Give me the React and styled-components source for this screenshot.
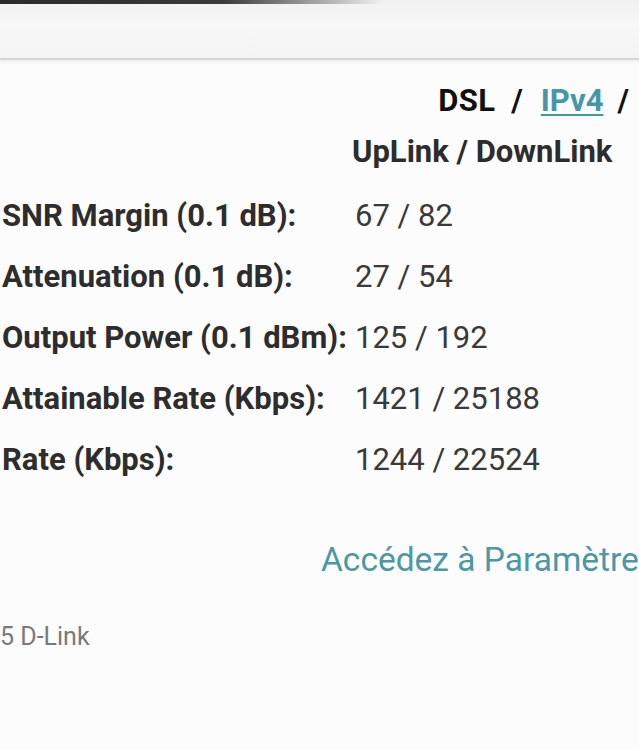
import styled, { createGlobalStyle } from "styled-components";

const rows = [
  { label: "SNR Margin (0.1 dB):", value: "67 / 82" },
  { label: "Attenuation (0.1 dB):", value: "27 / 54" },
  { label: "Output Power (0.1 dBm):", value: "125 / 192" },
  { label: "Attainable Rate (Kbps):", value: "1421 / 25188" },
  { label: "Rate (Kbps):", value: "1244 / 22524" },
];

function App() {
  return (
    <Page>
      <GlobalStyle />
      <TopBar>
        <TopEdge />
      </TopBar>
      <Main>
        <Crumbs>
          <Crumb>DSL</Crumb>
          <Slash>/</Slash>
          <CrumbLink href="#">IPv4</CrumbLink>
          <Slash>/</Slash>
        </Crumbs>
        <StatusTable>
          <span />
          <ColumnHead>UpLink / DownLink</ColumnHead>
          {rows.map((row) => (
            <Row key={row.label}>
              <Label>{row.label}</Label>
              <Value>{row.value}</Value>
            </Row>
          ))}
        </StatusTable>
        <SettingsLink href="#">Accédez à Paramètres</SettingsLink>
        <Footer>5 D-Link</Footer>
      </Main>
    </Page>
  );
}

const GlobalStyle = createGlobalStyle`
  html, body {
    margin: 0;
    padding: 0;
    background: #fcfcfc;
  }
  body {
    font-family: Roboto, "Liberation Sans", sans-serif;
  }
`;

const Page = styled.div`
  width: 639px;
  height: 750px;
  overflow: hidden;
  background: #fcfcfc;
`;

const TopBar = styled.header`
  height: 58px;
  background: linear-gradient(180deg, #f1f1f1 0%, #f8f8f8 45%, #f4f4f4 100%);
  border-bottom: 2px solid #d6d6d6;
  box-shadow: 0 2px 3px rgba(0, 0, 0, 0.06);
`;

const TopEdge = styled.div`
  height: 4px;
  background: linear-gradient(90deg, #2b2b2b 0%, #3a3a3a 35%, rgba(60, 60, 60, 0) 60%);
`;

const Main = styled.main`
  padding-top: 21px;
  display: flex;
  flex-direction: column;
`;

const Crumbs = styled.nav`
  display: flex;
  justify-content: flex-end;
  align-items: baseline;
  gap: 14px;
  padding-right: 6px;
  font-size: 31px;
  line-height: 40px;
  font-weight: 700;
`;

const Crumb = styled.span`
  color: #111;
  margin-right: 2px;
  letter-spacing: 0.3px;
`;

const Slash = styled.span`
  color: #111;
  margin-right: 4px;
`;

const CrumbLink = styled.a`
  color: #4796a8;
  text-decoration: underline;
  text-underline-offset: 3px;
  text-decoration-thickness: 2px;
`;

const StatusTable = styled.div`
  display: grid;
  grid-template-columns: 352px 1fr;
  row-gap: 21px;
  margin-top: 11px;
  font-size: 31px;
  line-height: 40px;

  & > :nth-child(2) {
    margin-bottom: 3px;
  }
`;

const ColumnHead = styled.div`
  font-weight: 700;
  color: #2c2c2c;
  white-space: nowrap;
`;

const Row = styled.div`
  display: contents;
`;

const Label = styled.div`
  font-weight: 700;
  color: #2d2d2d;
  padding-left: 2px;
  white-space: nowrap;
`;

const Value = styled.div`
  color: #3a3a3a;
  padding-left: 3px;
  white-space: nowrap;
`;

const SettingsLink = styled.a`
  margin-top: 59px;
  margin-left: 321px;
  font-size: 33.5px;
  line-height: 41px;
  color: #4c98a5;
  text-decoration: none;
  white-space: nowrap;
`;

const Footer = styled.footer`
  margin-top: 42px;
  font-size: 25px;
  line-height: 30px;
  color: #7a7a7a;
`;

export default App;
